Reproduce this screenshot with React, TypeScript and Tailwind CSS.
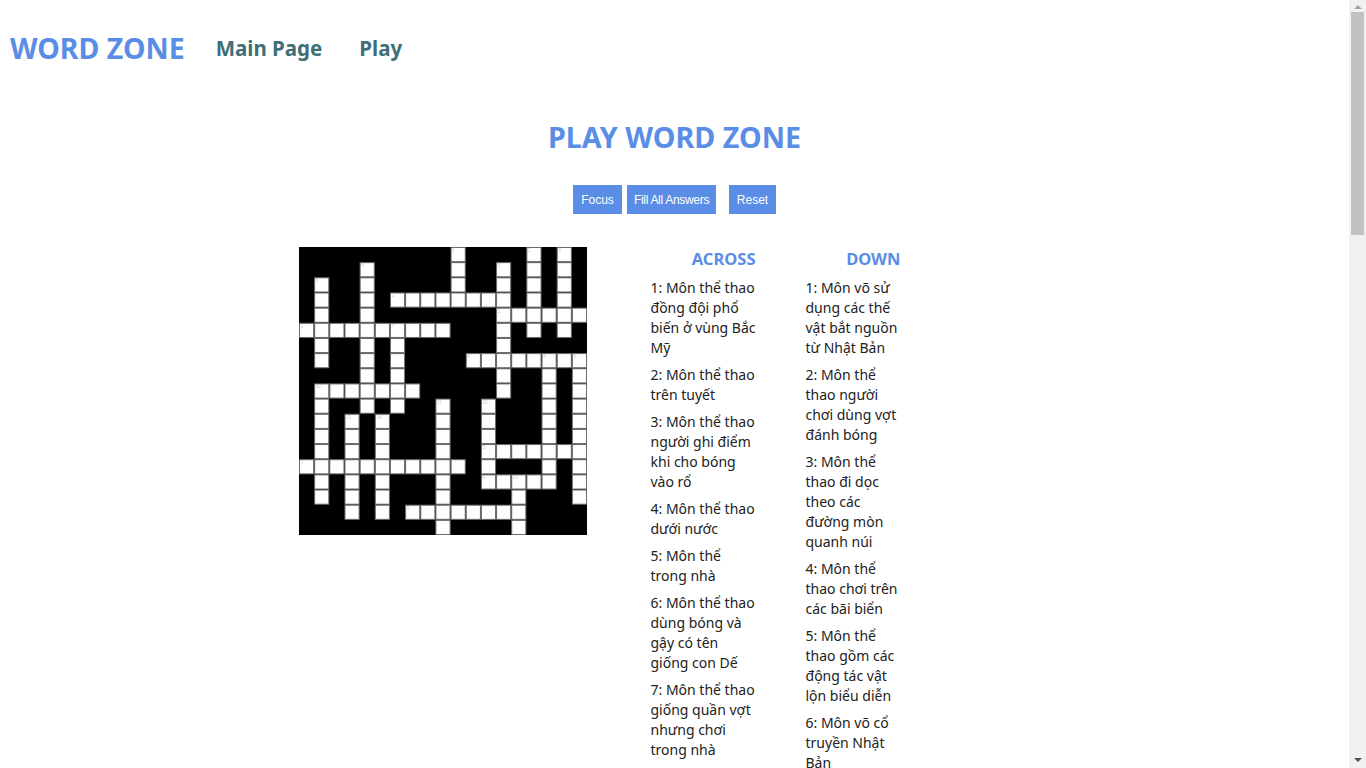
import React from "react";

const SIZE = 19;
const CELL = 288 / SIZE;

// white cells, row by row: [row, fromCol, toCol]
const runs: [number, number, number][] = [
  [0, 10, 10], [0, 15, 15], [0, 17, 17],
  [1, 4, 4], [1, 10, 10], [1, 13, 13], [1, 15, 15], [1, 17, 17],
  [2, 1, 1], [2, 4, 4], [2, 10, 10], [2, 13, 13], [2, 15, 15], [2, 17, 17],
  [3, 1, 1], [3, 4, 4], [3, 6, 13], [3, 15, 15], [3, 17, 17],
  [4, 1, 1], [4, 4, 4], [4, 13, 18],
  [5, 0, 9], [5, 13, 13], [5, 15, 15], [5, 17, 17],
  [6, 1, 1], [6, 4, 4], [6, 6, 6], [6, 13, 13],
  [7, 1, 1], [7, 4, 4], [7, 6, 6], [7, 11, 18],
  [8, 4, 4], [8, 6, 6], [8, 13, 13], [8, 16, 16], [8, 18, 18],
  [9, 1, 7], [9, 13, 13], [9, 16, 16], [9, 18, 18],
  [10, 1, 1], [10, 4, 4], [10, 6, 6], [10, 9, 9], [10, 12, 12], [10, 16, 16], [10, 18, 18],
  [11, 1, 1], [11, 3, 3], [11, 5, 5], [11, 9, 9], [11, 12, 12], [11, 16, 16], [11, 18, 18],
  [12, 1, 1], [12, 3, 3], [12, 5, 5], [12, 9, 9], [12, 12, 12], [12, 16, 16], [12, 18, 18],
  [13, 1, 1], [13, 3, 3], [13, 5, 5], [13, 9, 9], [13, 12, 18],
  [14, 0, 10], [14, 12, 12], [14, 16, 16], [14, 18, 18],
  [15, 1, 1], [15, 3, 3], [15, 5, 5], [15, 9, 9], [15, 12, 16], [15, 18, 18],
  [16, 1, 1], [16, 3, 3], [16, 5, 5], [16, 9, 9], [16, 14, 14], [16, 18, 18],
  [17, 3, 3], [17, 5, 5], [17, 7, 14],
  [18, 9, 9], [18, 14, 14],
];

const labels: [number, number, string][] = [
  [0, 10, "1"], [0, 15, "2"], [0, 17, "3"], [1, 4, "4"], [1, 13, "5"], [2, 1, "6"],
  [3, 6, "3"], [4, 13, "2"], [5, 0, "1"], [5, 6, "7"], [7, 11, "4"], [7, 16, "8"],
  [7, 18, "9"], [9, 1, "10"], [10, 9, "11"], [10, 12, "12"], [11, 3, "13"],
  [11, 5, "14"], [13, 12, "5"], [14, 0, "7"], [15, 12, "8"], [15, 14, "15"], [17, 7, "9"],
];

const cells: [number, number][] = [];
runs.forEach(([r, a, b]) => {
  for (let c = a; c <= b; c++) cells.push([r, c]);
});

const across = [
  "1: Môn thể thao đồng đội phổ biến ở vùng Bắc Mỹ",
  "2: Môn thể thao trên tuyết",
  "3: Môn thể thao người ghi điểm khi cho bóng vào rổ",
  "4: Môn thể thao dưới nước",
  "5: Môn thể trong nhà",
  "6: Môn thể thao dùng bóng và gậy có tên giống con Dế",
  "7: Môn thể thao giống quần vợt nhưng chơi trong nhà",
  "8: Môn thể thao dùng vợt và quả cầu lông",
  "9: Môn thể thao chạy trên đường đua",
];

const down = [
  "1: Môn võ sử dụng các thế vật bắt nguồn từ Nhật Bản",
  "2: Môn thể thao người chơi dùng vợt đánh bóng",
  "3: Môn thể thao đi dọc theo các đường mòn quanh núi",
  "4: Môn thể thao chơi trên các bãi biển",
  "5: Môn thể thao gồm các động tác vật lộn biểu diễn",
  "6: Môn võ cổ truyền Nhật Bản",
  "7: Môn thể thao đua xe hai bánh",
  "8: Môn thể thao trượt trên mặt nước bằng tấm ván",
  "9: Môn thể thao dùng gậy đánh bóng vào lỗ",
  "10: Môn thể thao đồng đội đá bóng vào khung thành",
  "11: Môn thể thao leo lên vách đá",
  "12: Môn thể thao đánh bóng qua lưới bằng tay",
  "13: Môn võ có nguồn gốc từ Hàn Quốc",
  "14: Môn thể thao đấu kiếm",
  "15: Môn thể thao bắn cung",
];

function Grid() {
  return (
    <svg width={288} height={288} viewBox="0 0 288 288" className="block shrink-0">
      <rect x={0} y={0} width={288} height={288} fill="#000" />
      {cells.map(([r, c]) => (
        <rect
          key={`${r}-${c}`}
          x={c * CELL + 0.5}
          y={r * CELL + 0.5}
          width={CELL - 1}
          height={CELL - 1}
          fill="#fff"
          stroke="#6b6b6b"
          strokeWidth={1}
        />
      ))}
      {labels.map(([r, c, t]) => (
        <text
          key={`l${r}-${c}`}
          x={c * CELL + 1.6}
          y={r * CELL + 5}
          fontSize={4.5}
          fill="#c8c8c8"
          fontFamily="Arial, sans-serif"
        >
          {t}
        </text>
      ))}
    </svg>
  );
}

function ClueColumn({ title, clues, width }: { title: string; clues: string[]; width: string }) {
  return (
    <div className={`${width} shrink-0`}>
      <h3 className="h-[24px] text-right text-[16.5px] font-bold leading-[24px] text-[#5a8de5]">{title}</h3>
      <div className="mt-[7px] flex flex-col gap-[7px]">
        {clues.map((c) => (
          <p key={c} className="text-[14px] leading-[20px] text-[#222]">
            {c}
          </p>
        ))}
      </div>
    </div>
  );
}

function Scrollbar() {
  return (
    <div className="fixed right-0 top-0 flex h-screen w-[17px] flex-col items-center bg-[#f1f1f1]">
      <div className="mt-[5px] h-0 w-0 border-x-[4px] border-b-[4px] border-x-transparent border-b-[#a3a3a3]" />
      <div className="mt-[3px] h-[223px] w-[13px] bg-[#c1c1c1]" />
      <div className="mt-auto mb-[6px] h-0 w-0 border-x-[4px] border-t-[4px] border-x-transparent border-t-[#505050]" />
    </div>
  );
}

export default function App() {
  return (
    <div className="min-h-[2530px] w-[1349px] bg-white font-['Noto_Sans',sans-serif]">
      <header className="flex h-[96px] items-center pl-[10px]">
        <a className="text-[28.5px] font-bold text-[#5a8de5]">WORD ZONE</a>
        <a className="ml-[31px] text-[20.5px] font-bold text-[#3e6f76]">Main Page</a>
        <a className="ml-[37px] text-[20.5px] font-bold text-[#3e6f76]">Play</a>
      </header>

      <h1 className="mt-[21px] text-center text-[28.7px] font-bold leading-[40px] text-[#5a8de5]">
        PLAY WORD ZONE
      </h1>

      <div className="mt-[28px] flex justify-center font-['Liberation_Sans',Arial,sans-serif] text-[12px] text-white">
        <button className="h-[29px] w-[49px] bg-[#5a8de5]">Focus</button>
        <button className="ml-[5px] h-[29px] w-[89px] whitespace-nowrap bg-[#5a8de5] tracking-[-0.3px]">
          Fill All Answers
        </button>
        <button className="ml-[13px] h-[29px] w-[47px] bg-[#5a8de5]">Reset</button>
      </div>

      <div className="mx-auto mt-[33px] flex w-[752px]">
        <Grid />
        <div className="ml-[64px] flex gap-[50px]">
          <ClueColumn title="ACROSS" clues={across} width="w-[105px]" />
          <ClueColumn title="DOWN" clues={down} width="w-[95px]" />
        </div>
      </div>

      <Scrollbar />
    </div>
  );
}
